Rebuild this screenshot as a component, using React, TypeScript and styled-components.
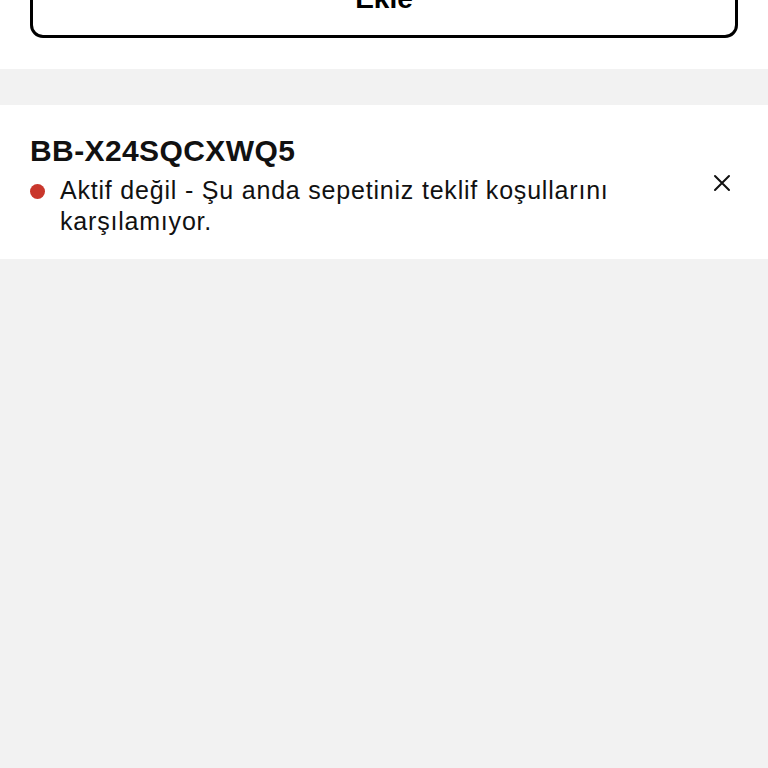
import React from "react";
import styled, { createGlobalStyle } from "styled-components";

const Global = createGlobalStyle`
  html, body { margin: 0; padding: 0; background: #f2f2f2; }
  body { font-family: "Liberation Sans", Arial, sans-serif; color: #111; }
  * { box-sizing: border-box; }
`;

const Page = styled.div`
  width: 768px;
  min-height: 768px;
  background: #f2f2f2;
  overflow: hidden;
  display: flex;
  flex-direction: column;
`;

const TopSection = styled.section`
  background: #fff;
  padding: 0 30px 31px;
  margin-bottom: 36px;
`;

const OutlineButton = styled.button`
  display: flex;
  align-items: flex-end;
  justify-content: center;
  width: 100%;
  height: 58px;
  margin-top: -20px;
  padding: 0 0 22px;
  background: #fff;
  border: 3px solid #000;
  border-radius: 13px;
  font-family: "Liberation Sans", Arial, sans-serif;
  font-weight: 700;
  font-size: 28px;
  line-height: 1;
  color: #000;
`;

const CouponCard = styled.section`
  background: #fff;
  padding: 28px 30px 22px;
  display: flex;
  align-items: flex-start;
  justify-content: space-between;
`;

const CouponBody = styled.div`
  display: flex;
  flex-direction: column;
  gap: 6px;
`;

const Code = styled.h2`
  margin: 0;
  font-size: 30px;
  line-height: 36px;
  letter-spacing: 0.4px;
  font-weight: 700;
  color: #111;
`;

const Status = styled.div`
  display: flex;
  align-items: flex-start;
  gap: 15px;
`;

const Dot = styled.span`
  flex: none;
  width: 15px;
  height: 15px;
  border-radius: 50%;
  background: #c9372c;
  margin-top: 9px;
`;

const StatusText = styled.p`
  margin: 0;
  width: 600px;
  font-size: 25px;
  line-height: 31px;
  letter-spacing: 0.8px;
  color: #111;
`;

const CloseButton = styled.button`
  flex: none;
  margin-top: 37px;
  margin-right: 3px;
  padding: 0;
  width: 26px;
  height: 26px;
  display: flex;
  align-items: center;
  justify-content: center;
  background: none;
  border: 0;
`;

export default function App() {
  return (
    <Page>
      <Global />
      <TopSection>
        <OutlineButton>Ekle</OutlineButton>
      </TopSection>
      <CouponCard>
        <CouponBody>
          <Code>BB-X24SQCXWQ5</Code>
          <Status>
            <Dot />
            <StatusText>
              Aktif değil - Şu anda sepetiniz teklif koşullarını karşılamıyor.
            </StatusText>
          </Status>
        </CouponBody>
        <CloseButton aria-label="Kapat">
          <svg width="18" height="18" viewBox="0 0 18 18">
            <path d="M2 2 L16 16 M16 2 L2 16" stroke="#111" strokeWidth="2" strokeLinecap="round" />
          </svg>
        </CloseButton>
      </CouponCard>
    </Page>
  );
}
